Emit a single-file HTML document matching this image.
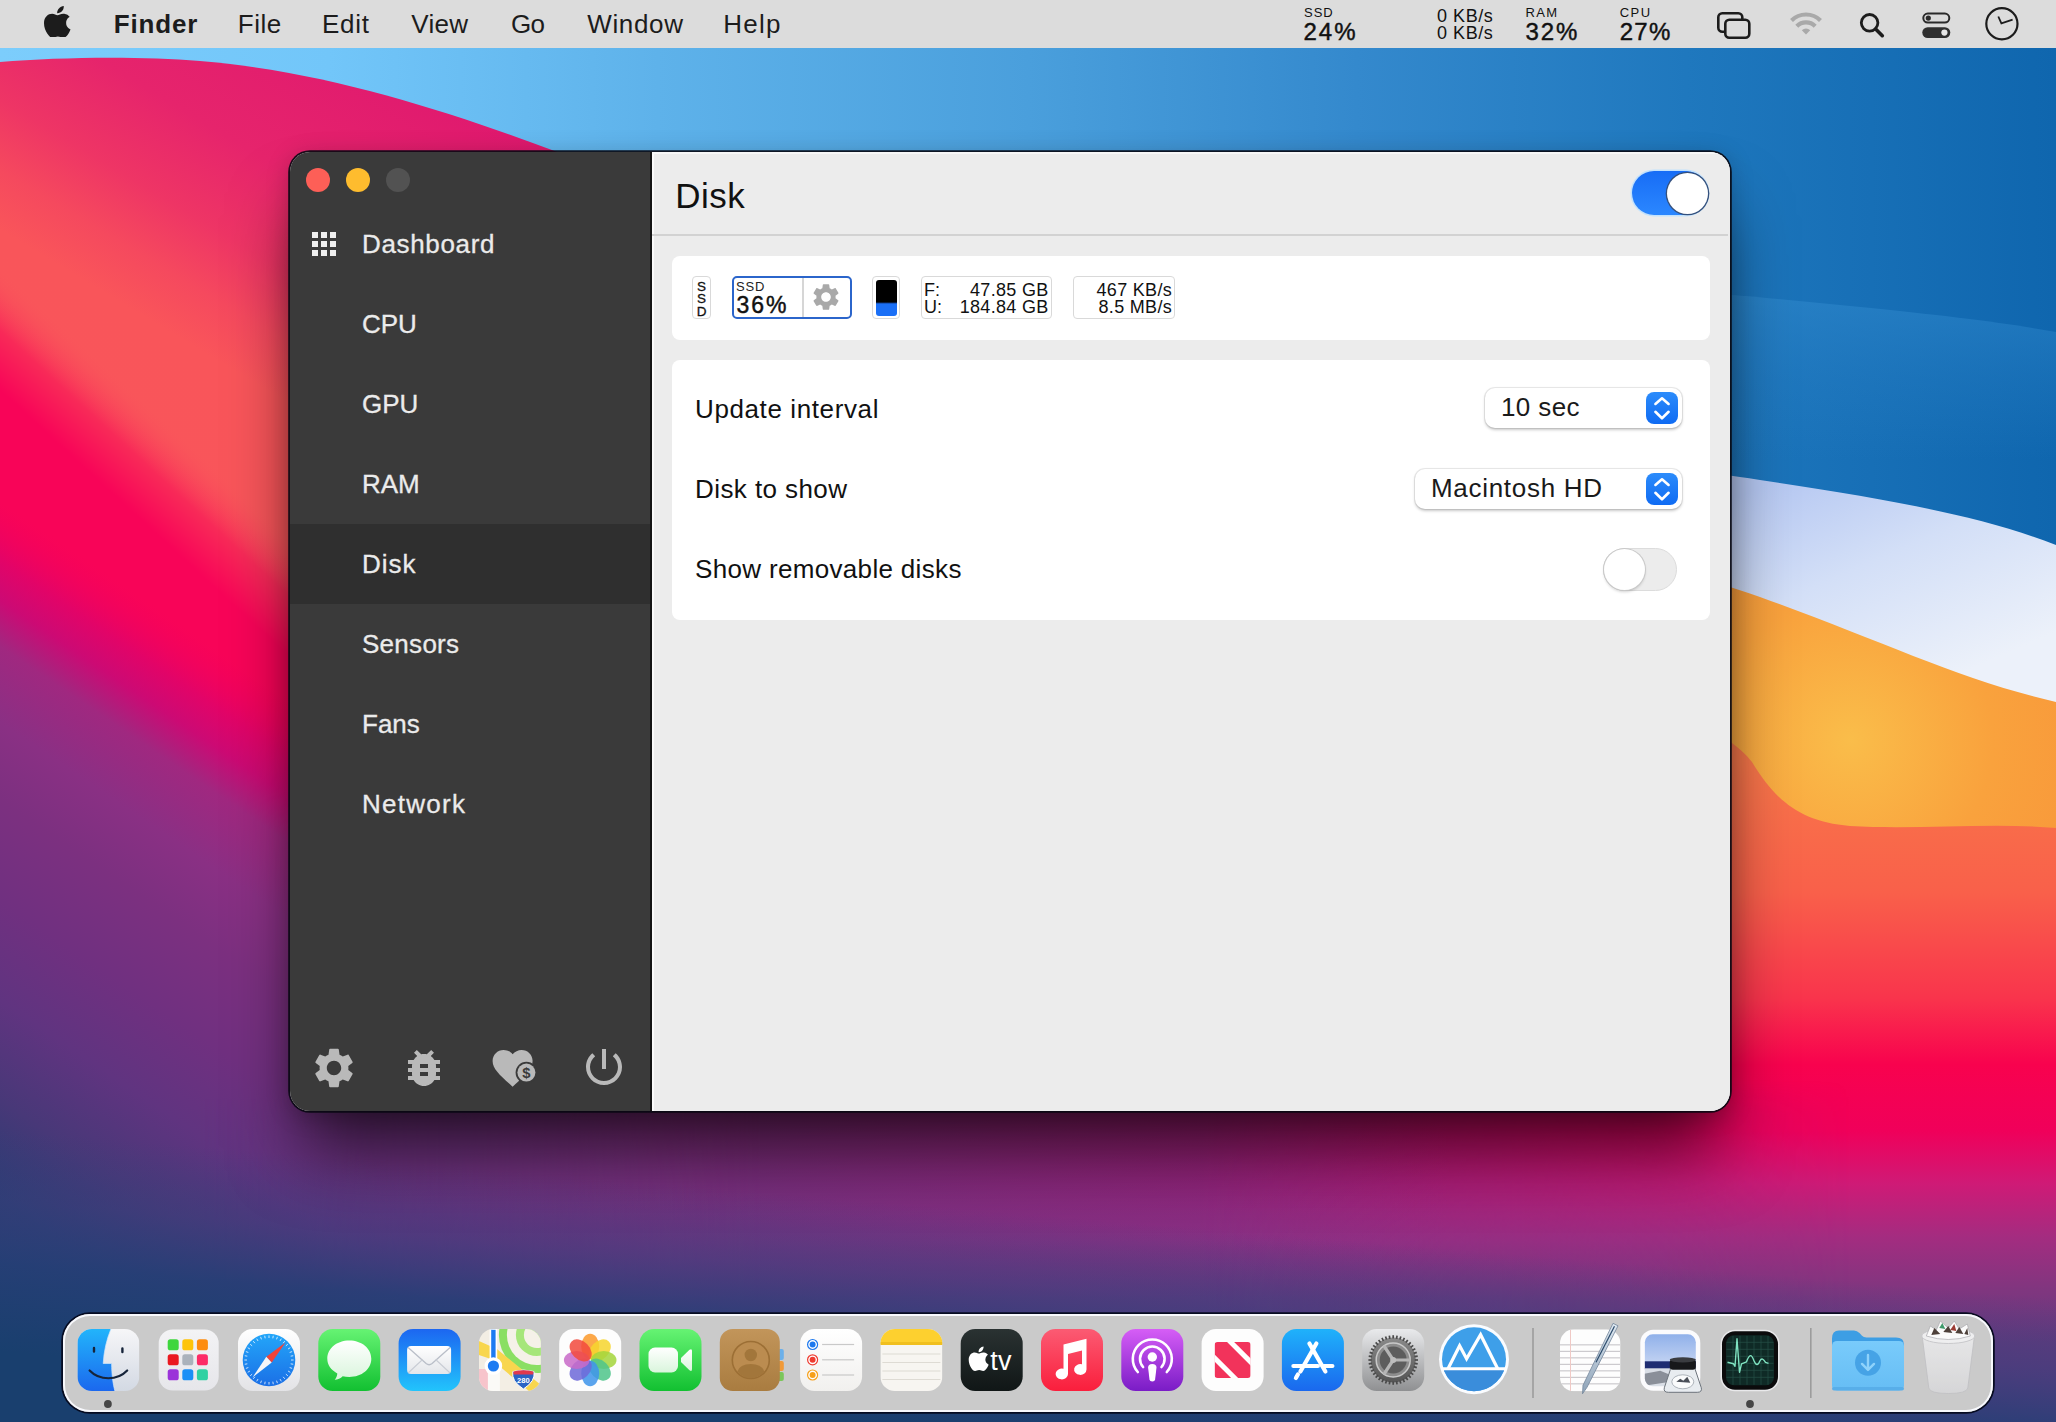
<!DOCTYPE html>
<html lang="en">
<head>
<meta charset="utf-8">
<title>Disk</title>
<style>
html,body{margin:0;padding:0}
body{width:2056px;height:1422px;overflow:hidden;position:relative;font-family:"Liberation Sans",sans-serif;background:#1a6fb6;color:#000}
.abs{position:absolute}
.val{-webkit-text-stroke:.45px currentColor}
#wall{position:absolute;left:0;top:0;width:2056px;height:1422px;display:block}
/* ---------- menubar ---------- */
#menubar{position:absolute;left:0;top:0;width:2056px;height:48px;background:#dcdcdc}
#menubar .mi{position:absolute;top:1px;height:48px;line-height:47px;font-size:26px;color:#1c1c1c;white-space:nowrap}
#menubar .st{position:absolute;white-space:nowrap;color:#111}
/* ---------- window ---------- */
#win{position:absolute;left:290px;top:152px;width:1440px;height:959px;border-radius:20px;background:#ececec;
 box-shadow:0 0 0 1.800px rgba(8,8,18,.9),0 50px 70px -12px rgba(0,0,0,.66),0 4px 24px rgba(0,0,0,.22);overflow:hidden}
#side{position:absolute;left:0;top:0;width:360px;height:959px;background:#3a3a3a}
#sep{position:absolute;left:360px;top:0;width:2px;height:959px;background:#141414}
#main{position:absolute;left:362px;top:0;width:1078px;height:959px;background:#ececec}
.nav{position:absolute;left:0;width:360px;height:80px;line-height:80px;font-size:26px;color:#ebebeb;white-space:nowrap}
.nav span{position:absolute;left:72px;top:0;-webkit-text-stroke:.3px #ebebeb}
.nav.sel{background:#2f2f2f}
.card{position:absolute;background:#fff;border-radius:8px}
.row{position:absolute;left:23px;font-size:26px;line-height:30px;color:#111;white-space:nowrap}
.wd{border:1px solid #d9d9d9;border-radius:4px;background:#fff;color:#111;white-space:nowrap}
.pop{border-radius:10px;background:#fff;box-shadow:0 0 0 1px rgba(0,0,0,.07),0 1.5px 3px rgba(0,0,0,.22)}
.pop span{position:absolute;top:-1.400px;line-height:40px;font-size:26px;color:#1a1a1a;white-space:nowrap}
.pop svg{position:absolute;right:4px;top:4px}
/* ---------- dock ---------- */
#dock{position:absolute;left:63px;top:1314px;width:1930px;height:98px;border-radius:27px;background:#cacaca;
 box-shadow:inset 0 0 0 2px #f7f8fc,0 0 0 1.800px rgba(4,8,28,.95)}
</style>
</head>
<body>
<svg id="wall" width="2056" height="1422" viewBox="0 0 2056 1422">
<defs>
 <linearGradient id="sky" gradientUnits="userSpaceOnUse" x1="0" y1="0" x2="2056" y2="0">
  <stop offset="0" stop-color="#7ccdfc"/><stop offset=".16" stop-color="#72c6f9"/><stop offset=".32" stop-color="#5eb2ea"/>
  <stop offset=".5" stop-color="#4a9fdc"/><stop offset=".66" stop-color="#3489cd"/><stop offset=".82" stop-color="#1f78be"/>
  <stop offset="1" stop-color="#0f66ae"/>
 </linearGradient>
 <linearGradient id="band" gradientUnits="userSpaceOnUse" x1="0" y1="295" x2="0" y2="460">
  <stop offset="0" stop-color="#2f88cc" stop-opacity=".6"/><stop offset=".5" stop-color="#2a82c8" stop-opacity=".3"/><stop offset="1" stop-color="#2a82c8" stop-opacity="0"/>
 </linearGradient>
 <linearGradient id="whiteB" gradientUnits="userSpaceOnUse" x1="1800" y1="470" x2="1900" y2="700">
  <stop offset="0" stop-color="#b6c8f2"/><stop offset=".45" stop-color="#d3dff7"/><stop offset="1" stop-color="#ecf1fa"/>
 </linearGradient>
 <radialGradient id="orangeB" gradientUnits="userSpaceOnUse" cx="1850" cy="740" r="260">
  <stop offset="0" stop-color="#fabd4a"/><stop offset=".55" stop-color="#f9a23d"/><stop offset="1" stop-color="#f8973a"/>
 </radialGradient>
 <linearGradient id="coralB" gradientUnits="userSpaceOnUse" x1="0" y1="760" x2="0" y2="1422">
  <stop offset="0" stop-color="#f8774a"/><stop offset=".2" stop-color="#f9604a"/><stop offset=".36" stop-color="#f9344c"/>
  <stop offset=".46" stop-color="#f8024e"/><stop offset=".56" stop-color="#f0005a"/><stop offset=".64" stop-color="#cf1a76"/>
  <stop offset=".72" stop-color="#a42c80"/><stop offset=".8" stop-color="#80367f"/><stop offset=".88" stop-color="#623a7e"/><stop offset="1" stop-color="#563a7e"/>
 </linearGradient>
 <linearGradient id="blobA" gradientUnits="userSpaceOnUse" x1="500" y1="0" x2="58.800" y2="735.300">
  <stop offset=".10" stop-color="#df186f"/><stop offset=".30" stop-color="#e6246c"/><stop offset=".40" stop-color="#ee3565"/>
  <stop offset=".47" stop-color="#f5495e"/><stop offset=".53" stop-color="#f9555a"/><stop offset="1" stop-color="#f9565a"/>
 </linearGradient>
 <linearGradient id="blobB1" gradientUnits="userSpaceOnUse" x1="0" y1="200" x2="-199.300" y2="416.600">
  <stop offset=".175" stop-color="#f9525b" stop-opacity="0"/><stop offset=".325" stop-color="#f82a58"/><stop offset=".475" stop-color="#f80458"/><stop offset="1" stop-color="#f80458"/>
 </linearGradient>
 <linearGradient id="blob" gradientUnits="userSpaceOnUse" x1="0" y1="450" x2="-441.700" y2="1099.600">
  <stop offset=".053" stop-color="#f4005c" stop-opacity="0"/><stop offset=".116" stop-color="#e20468"/><stop offset=".158" stop-color="#cc0a74"/>
  <stop offset=".207" stop-color="#a02880"/><stop offset=".287" stop-color="#8a3084"/><stop offset=".368" stop-color="#7c3080"/>
  <stop offset=".474" stop-color="#703080"/><stop offset=".579" stop-color="#603480"/><stop offset=".684" stop-color="#483878"/>
  <stop offset=".789" stop-color="#283c72"/><stop offset=".895" stop-color="#193b69"/><stop offset="1" stop-color="#143a65"/>
 </linearGradient>
 <linearGradient id="purp" gradientUnits="userSpaceOnUse" x1="0" y1="1080" x2="0" y2="1422">
  <stop offset="0" stop-color="#a8146a" stop-opacity="0"/><stop offset=".1" stop-color="#a8146a"/><stop offset=".3" stop-color="#98207a"/><stop offset=".47" stop-color="#8a3084"/>
  <stop offset=".64" stop-color="#5f3b80"/><stop offset="1" stop-color="#5a3a80"/>
 </linearGradient>
 <linearGradient id="indigoH" gradientUnits="userSpaceOnUse" x1="450" y1="0" x2="1450" y2="0">
  <stop offset="0" stop-color="#573a7e" stop-opacity=".8"/><stop offset=".5" stop-color="#6a3680" stop-opacity=".45"/><stop offset="1" stop-color="#803080" stop-opacity="0"/>
 </linearGradient>
 <linearGradient id="fadeR" gradientUnits="userSpaceOnUse" x1="1200" y1="0" x2="1850" y2="0">
  <stop offset="0" stop-color="#fff" stop-opacity="1"/><stop offset="1" stop-color="#fff" stop-opacity="0"/>
 </linearGradient>
 <mask id="mR" maskUnits="userSpaceOnUse" x="0" y="0" width="2056" height="1422"><rect x="0" y="0" width="2056" height="1422" fill="url(#fadeR)"/></mask>
 <linearGradient id="navy" gradientUnits="userSpaceOnUse" x1="0" y1="1130" x2="-18" y2="1350">
  <stop offset="0" stop-color="#3a3f7c" stop-opacity="0"/><stop offset=".32" stop-color="#3a3f7c" stop-opacity=".5"/>
  <stop offset=".6" stop-color="#263f76" stop-opacity=".9"/><stop offset="1" stop-color="#193f6e" stop-opacity="1"/>
 </linearGradient>
 <linearGradient id="fadeL" gradientUnits="userSpaceOnUse" x1="200" y1="0" x2="760" y2="0">
  <stop offset="0" stop-color="#fff" stop-opacity="1"/><stop offset="1" stop-color="#fff" stop-opacity="0"/>
 </linearGradient>
 <mask id="mL" maskUnits="userSpaceOnUse" x="0" y="0" width="2056" height="1422"><rect x="0" y="0" width="2056" height="1422" fill="url(#fadeL)"/></mask>
</defs>
<rect width="2056" height="1422" fill="url(#sky)"/>
<!-- right waves -->
<path d="M1500,282 C1650,286 1750,296 1850,306 C1950,316 2000,322 2056,332 L2056,480 L1500,480 Z" fill="url(#band)"/>
<path d="M1500,455 C1620,462 1700,470 1760,480 C1880,498 1980,515 2056,545 L2056,1422 L1500,1422 Z" fill="url(#whiteB)"/>
<path d="M1500,530 C1600,550 1700,575 1760,597 C1880,640 1960,680 2056,702 L2056,1422 L1500,1422 Z" fill="url(#orangeB)"/>
<path d="M200,640 L1500,640 C1640,690 1730,730 1752,762 C1775,800 1800,822 1850,826 C1920,830 1990,822 2056,828 L2056,1422 L200,1422 Z" fill="url(#coralB)"/>
<rect x="200" y="1080" width="1856" height="342" fill="url(#purp)" mask="url(#mR)"/>
<rect x="200" y="1090" width="1300" height="332" fill="url(#indigoH)"/>
<!-- left blob -->
<path d="M0,62 C60,57 140,56 200,61 C330,72 450,112 560,153 C760,230 900,420 900,700 L900,1100 L0,1100 Z" fill="url(#blobA)"/>
<path d="M0,62 C60,57 140,56 200,61 C330,72 450,112 560,153 C760,230 900,420 900,700 L900,1100 L0,1100 Z" fill="url(#blobB1)"/>
<path d="M0,62 C60,57 140,56 200,61 C330,72 450,112 560,153 C760,230 900,420 900,700 L900,1100 L0,1100 Z" fill="url(#blob)"/>
<rect x="0" y="1099" width="800" height="323" fill="url(#blob)" mask="url(#mL)"/>
<rect x="0" y="1100" width="2056" height="322" fill="url(#navy)"/>
</svg>
<div id="menubar">
 <svg class="abs" style="left:44px;top:5.500px" width="26.500" height="31.800" viewBox="0 0 814 1000" preserveAspectRatio="none"><path fill="#1c1c1c" d="M788.1 340.9c-5.8 4.5-108.2 62.2-108.2 190.5 0 148.4 130.3 200.9 134.2 202.2-.6 3.2-20.700 73.900-68.700 143.900-42.800 61.600-87.500 123.100-155.500 123.100s-85.500-39.500-164-39.500c-76.500 0-103.700 40.800-165.900 40.800s-105.600-57-155.500-127C46.700 790.700 0 663 0 541.800c0-194.400 126.400-297.500 250.800-297.500 66.100 0 121.200 43.400 162.700 43.400 39.500 0 101.100-46 176.300-46 28.500 0 130.900 2.600 198.300 99.200zm-234-181.500c31.100-36.900 53.100-88.100 53.100-139.300 0-7.100-.6-14.300-1.900-20.100-50.600 1.900-110.800 33.700-147.100 75.800-28.500 32.400-55.100 83.600-55.100 135.500 0 7.800 1.300 15.600 1.900 18.100 3.200.6 8.400 1.300 13.600 1.300 45.400 0 102.500-30.400 135.500-71.300z"/></svg>
 <div class="mi" style="left:113.700px;font-weight:bold;letter-spacing:.86px">Finder</div>
 <div class="mi" style="left:237.800px;letter-spacing:.5px">File</div>
 <div class="mi" style="left:321.900px;letter-spacing:.77px">Edit</div>
 <div class="mi" style="left:411.300px;letter-spacing:.27px">View</div>
 <div class="mi" style="left:510.900px;letter-spacing:-.5px">Go</div>
 <div class="mi" style="left:587.200px;letter-spacing:.66px">Window</div>
 <div class="mi" style="left:723.300px;letter-spacing:1.2px">Help</div>
 <!-- status items -->
 <div class="st" style="left:1304px;top:6px;font-size:13px;line-height:14px;letter-spacing:1px">SSD</div>
 <div class="st val" style="left:1303.500px;top:18.500px;font-size:24px;line-height:26px;letter-spacing:2px">24%</div>
 <div class="st" style="left:1437px;top:6.500px;font-size:18px;line-height:18px;text-align:right;width:56px;letter-spacing:.55px">0 KB/s</div>
 <div class="st" style="left:1437px;top:24.300px;font-size:18px;line-height:18px;text-align:right;width:56px;letter-spacing:.55px">0 KB/s</div>
 <div class="st" style="left:1525.600px;top:6px;font-size:13px;line-height:14px;letter-spacing:1.3px">RAM</div>
 <div class="st val" style="left:1525.600px;top:18.500px;font-size:24px;line-height:26px;letter-spacing:1.800px">32%</div>
 <div class="st" style="left:1619.800px;top:6px;font-size:13px;line-height:14px;letter-spacing:1.4px">CPU</div>
 <div class="st val" style="left:1619.800px;top:18.500px;font-size:24px;line-height:26px;letter-spacing:1.200px">27%</div>
 <svg class="abs" style="left:1710px;top:0" width="346" height="48" viewBox="1710 0 346 48" fill="none">
  <!-- screen mirroring -->
  <rect x="1718.3" y="13.3" width="24" height="18.5" rx="4" stroke="#1c1c1c" stroke-width="2.6"/>
  <rect x="1725.3" y="19.8" width="24" height="18" rx="4" fill="#dcdcdc" stroke="#1c1c1c" stroke-width="2.6"/>
  <!-- wifi (dim) -->
  <g stroke="#a9a9a9" stroke-width="4.2" stroke-linecap="butt">
   <path d="M1791.5,20.5 A20.5,20.5 0 0 1 1820.500,20.500"/>
   <path d="M1796.800,26.200 A13,13 0 0 1 1815.200,26.200"/>
  </g>
  <path d="M1801.8,30.200 A6,6 0 0 1 1810.200,30.200 L1806,34.600 Z" fill="#a9a9a9"/>
  <!-- search -->
  <circle cx="1869.600" cy="22.8" r="8.300" stroke="#1c1c1c" stroke-width="2.800"/>
  <path d="M1875.600,29 L1882.300,35.700" stroke="#1c1c1c" stroke-width="3.600" stroke-linecap="round"/>
  <!-- control center -->
  <rect x="1923.300" y="13.600" width="26" height="9" rx="4.500" stroke="#2a2a2a" stroke-width="2"/>
  <circle cx="1928.300" cy="18.100" r="2.600" fill="#2a2a2a"/>
  <rect x="1922.300" y="27.200" width="28" height="10.800" rx="5.400" fill="#2f2f2f"/>
  <circle cx="1944.400" cy="32.600" r="3.100" fill="#e6e6e6"/>
  <!-- clock -->
  <circle cx="2001.900" cy="23.700" r="15.600" stroke="#1c1c1c" stroke-width="2.200"/>
  <path d="M1998.300,16.500 L2001.400,23.300 L2012.600,19.600" stroke="#1c1c1c" stroke-width="1.800" stroke-linejoin="miter"/>
 </svg>
</div>
<div id="win">
 <div id="side">
  <div class="abs" style="left:16px;top:16px;width:24px;height:24px;border-radius:50%;background:#fd5f57"></div>
  <div class="abs" style="left:56px;top:16px;width:24px;height:24px;border-radius:50%;background:#febc2e"></div>
  <div class="abs" style="left:96px;top:16px;width:24px;height:24px;border-radius:50%;background:#525252"></div>
  <div class="nav" style="top:52px">
   <svg class="abs" style="left:22px;top:28px" width="24" height="24" viewBox="0 0 24 24" fill="#efefef"><rect x="0" y="0" width="6" height="6"/><rect x="9" y="0" width="6" height="6"/><rect x="18" y="0" width="6" height="6"/><rect x="0" y="9" width="6" height="6"/><rect x="9" y="9" width="6" height="6"/><rect x="18" y="9" width="6" height="6"/><rect x="0" y="18" width="6" height="6"/><rect x="9" y="18" width="6" height="6"/><rect x="18" y="18" width="6" height="6"/></svg>
   <span style="letter-spacing:.66px">Dashboard</span></div>
  <div class="nav" style="top:132px"><span>CPU</span></div>
  <div class="nav" style="top:212px"><span>GPU</span></div>
  <div class="nav" style="top:292px"><span>RAM</span></div>
  <div class="nav sel" style="top:372px"><span style="letter-spacing:1px">Disk</span></div>
  <div class="nav" style="top:452px"><span style="letter-spacing:.28px">Sensors</span></div>
  <div class="nav" style="top:532px"><span>Fans</span></div>
  <div class="nav" style="top:612px"><span style="letter-spacing:1.27px">Network</span></div>
  <!-- bottom icons (48px material) -->
  <svg class="abs" style="left:20px;top:892px" width="48" height="48" viewBox="0 0 24 24" fill="#b9b9b9"><path d="M19.140,12.940c0.040-0.300,0.060-0.610,0.060-0.940c0-0.320-0.020-0.640-0.070-0.940l2.030-1.580c0.180-0.140,0.230-0.410,0.120-0.610 l-1.920-3.320c-0.120-0.220-0.370-0.290-0.590-0.220l-2.390,0.960c-0.500-0.380-1.030-0.700-1.620-0.940L14.400,2.810c-0.040-0.240-0.240-0.410-0.480-0.410 h-3.840c-0.240,0-0.430,0.170-0.470,0.410L9.250,5.350C8.660,5.590,8.120,5.920,7.630,6.290L5.240,5.330c-0.220-0.080-0.470,0-0.590,0.220L2.740,8.870 C2.620,9.080,2.660,9.340,2.860,9.480l2.030,1.580C4.840,11.360,4.800,11.690,4.800,12s0.020,0.640,0.070,0.940l-2.030,1.580 c-0.180,0.140-0.230,0.410-0.120,0.610l1.920,3.320c0.120,0.220,0.370,0.290,0.590,0.220l2.390-0.960c0.500,0.380,1.030,0.700,1.620,0.940l0.360,2.540 c0.050,0.240,0.240,0.410,0.480,0.410h3.840c0.240,0,0.440-0.170,0.470-0.410l0.360-2.540c0.590-0.240,1.130-0.560,1.620-0.940l2.390,0.960 c0.220,0.080,0.470,0,0.590-0.220l1.920-3.320c0.120-0.220,0.070-0.470-0.120-0.610L19.140,12.940z M12,15.600c-1.980,0-3.600-1.620-3.600-3.600 s1.620-3.600,3.600-3.600s3.600,1.620,3.600,3.600S13.980,15.600,12,15.600z"/></svg>
  <svg class="abs" style="left:110px;top:892px" width="48" height="48" viewBox="0 0 24 24" fill="#b9b9b9"><path d="M20 8h-2.810c-.45-.78-1.070-1.450-1.820-1.960L17 4.410 15.590 3l-2.170 2.170C12.960 5.060 12.490 5 12 5c-.49 0-.96.06-1.410.17L8.410 3 7 4.410l1.620 1.630C7.880 6.550 7.260 7.220 6.810 8H4v2h2.090c-.05.33-.09.66-.09 1v1H4v2h2v1c0 .34.04.67.09 1H4v2h2.810c1.040 1.790 2.970 3 5.190 3s4.150-1.210 5.190-3H20v-2h-2.090c.05-.33.09-.66.09-1v-1h2v-2h-2v-1c0-.34-.04-.67-.09-1H20V8zm-6 8h-4v-2h4v2zm0-4h-4v-2h4v2z"/></svg>
  <svg class="abs" style="left:200px;top:892px" width="48" height="48" viewBox="0 0 24 24"><path fill="#b9b9b9" d="M11.300 21.350l-1.450-1.320C4.700 15.360 1.300 12.280 1.300 8.500 1.300 5.420 3.720 3 6.800 3c1.740 0 3.410.81 4.500 2.090C12.390 3.810 14.060 3 15.800 3 18.880 3 21.300 5.420 21.300 8.500c0 3.780-3.400 6.860-8.550 11.540L11.300 21.350z"/><circle cx="18.200" cy="14.300" r="5.400" fill="#3a3a3a"/><circle cx="18.200" cy="14.300" r="4.500" fill="#b9b9b9"/><text x="18.200" y="17" font-family="Liberation Sans, sans-serif" font-size="7.400" font-weight="bold" text-anchor="middle" fill="#3a3a3a">$</text></svg>
  <svg class="abs" style="left:290px;top:891px" width="48" height="48" viewBox="0 0 24 24" fill="#b9b9b9"><path d="M13 3h-2v10h2V3zm4.830 2.170l-1.420 1.420C17.990 7.860 19 9.810 19 12c0 3.870-3.130 7-7 7s-7-3.130-7-7c0-2.190 1.010-4.140 2.580-5.420L6.170 5.170C4.230 6.820 3 9.260 3 12c0 4.970 4.030 9 9 9s9-4.030 9-9c0-2.740-1.230-5.180-3.170-6.830z"/></svg>
 </div>
 <div id="sep"></div>
 <div id="main">
  <div class="abs" style="left:0;top:0;width:2px;height:959px;background:#fafafa"></div><div class="abs" style="left:0;top:0;width:1078px;height:1.500px;background:#f7f7f7"></div>
  <div class="abs" style="left:23.300px;top:22px;font-size:35px;line-height:44px;color:#111;letter-spacing:.45px">Disk</div>
  <!-- toggle on -->
  <div class="abs" style="left:980px;top:19px;width:76px;height:44px;border-radius:22px;background:linear-gradient(#176df6,#2b87ff);box-shadow:0 0 0 1.500px rgba(190,225,255,.9)">
   <div class="abs" style="left:35px;top:1.500px;width:41px;height:41px;border-radius:50%;background:#fff;box-shadow:0 0 0 1.300px #34507c"></div></div>
  <div class="abs" style="left:0;top:82px;width:1076px;height:2px;background:#d2d2d2"></div>
  <!-- card 1 -->
  <div class="card" style="left:20px;top:104px;width:1038px;height:84px">
   <div class="abs wd" style="left:20px;top:20px;width:17px;height:41px"><div class="abs" style="left:0;top:3.500px;width:17px;text-align:center;font-size:13.500px;line-height:12.500px;-webkit-text-stroke:.3px #111">S<br>S<br>D</div></div>
   <div class="abs" style="left:60px;top:20px;width:116px;height:39px;border:2px solid #2b65cb;border-radius:5px;background:#fff">
    <div class="abs" style="left:2px;top:1.500px;font-size:13px;line-height:14px;color:#222;letter-spacing:.8px">SSD</div>
    <div class="abs val" style="left:2.500px;top:13.500px;font-size:23px;line-height:26px;color:#111;letter-spacing:2px">36%</div>
    <div class="abs" style="left:68px;top:0;width:1.500px;height:39px;background:#d6d6d6"></div>
    <svg class="abs" style="left:76px;top:3px" width="32" height="32" viewBox="0 0 24 24" fill="#a9a9a9"><path d="M19.140,12.940c0.040-0.300,0.060-0.610,0.060-0.940c0-0.320-0.020-0.640-0.070-0.940l2.030-1.580c0.180-0.140,0.230-0.410,0.120-0.610 l-1.920-3.320c-0.120-0.220-0.370-0.290-0.590-0.220l-2.390,0.960c-0.500-0.380-1.030-0.700-1.620-0.940L14.400,2.810c-0.040-0.240-0.240-0.410-0.480-0.410 h-3.840c-0.240,0-0.430,0.170-0.470,0.410L9.250,5.350C8.660,5.590,8.120,5.920,7.630,6.290L5.240,5.330c-0.220-0.080-0.470,0-0.590,0.220L2.740,8.870 C2.620,9.080,2.660,9.340,2.860,9.480l2.030,1.580C4.840,11.360,4.800,11.690,4.800,12s0.020,0.640,0.070,0.940l-2.030,1.580 c-0.180,0.140-0.230,0.410-0.120,0.610l1.920,3.320c0.120,0.220,0.370,0.290,0.590,0.220l2.390-0.960c0.500,0.380,1.030,0.700,1.620,0.940l0.360,2.540 c0.050,0.240,0.240,0.410,0.480,0.410h3.840c0.240,0,0.440-0.170,0.470-0.410l0.360-2.540c0.590-0.240,1.130-0.560,1.620-0.940l2.390,0.960 c0.220,0.080,0.470,0,0.590-0.220l1.920-3.320c0.120-0.220,0.070-0.470-0.120-0.610L19.140,12.940z M12,15.600c-1.980,0-3.600-1.620-3.600-3.600 s1.620-3.600,3.600-3.600s3.600,1.620,3.600,3.600S13.980,15.600,12,15.600z"/></svg>
   </div>
   <div class="abs wd" style="left:200px;top:20px;width:26px;height:41px"><div class="abs" style="left:3px;top:3px;width:21px;height:36px;border-radius:3px;background:linear-gradient(#000 0,#000 60%,#0a2a66 64%,#1a6ff6 66%,#1a6ff6 100%)"></div></div>
   <div class="abs wd" style="left:249px;top:20px;width:129px;height:41px;font-size:18px;line-height:17px">
    <div class="abs" style="left:2px;top:4.500px">F:</div><div class="abs" style="right:2.500px;top:4.500px;letter-spacing:.3px">47.85 GB</div>
    <div class="abs" style="left:2px;top:21.800px">U:</div><div class="abs" style="right:2.500px;top:21.800px;letter-spacing:.3px">184.84 GB</div></div>
   <div class="abs wd" style="left:401px;top:20px;width:100px;height:41px;font-size:18px;line-height:17px">
    <div class="abs" style="right:2px;top:4.500px;letter-spacing:.3px">467 KB/s</div><div class="abs" style="right:2px;top:21.800px;letter-spacing:.3px">8.5 MB/s</div></div>
  </div>
  <!-- card 2 -->
  <div class="card" style="left:20px;top:208px;width:1038px;height:260px">
   <div class="row" style="top:33.600px;letter-spacing:.61px">Update interval</div>
   <div class="row" style="top:113.600px;letter-spacing:.42px">Disk to show</div>
   <div class="row" style="top:193.800px;letter-spacing:.33px">Show removable disks</div>
   <div class="abs pop" style="left:813px;top:28px;width:197px;height:40px"><span style="left:16px;letter-spacing:.4px">10 sec</span><svg width="32" height="32" viewBox="0 0 32 32"><defs><linearGradient id="stp" x1="0" y1="0" x2="0" y2="1"><stop offset="0" stop-color="#2c8cfb"/><stop offset="1" stop-color="#0f6bf3"/></linearGradient></defs><rect width="32" height="32" rx="8" fill="url(#stp)"/><path d="M9.400,11.900 L16,6.300 L22.600,11.900 M9.400,19.800 L16,26.300 L22.600,19.800" fill="none" stroke="#fff" stroke-width="2.600" stroke-linecap="round" stroke-linejoin="round"/></svg></div>
   <div class="abs pop" style="left:743px;top:109px;width:267px;height:40px"><span style="left:16px;letter-spacing:.7px">Macintosh HD</span><svg width="32" height="32" viewBox="0 0 32 32"><rect width="32" height="32" rx="8" fill="url(#stp)"/><path d="M9.400,11.900 L16,6.300 L22.600,11.900 M9.400,19.800 L16,26.300 L22.600,19.800" fill="none" stroke="#fff" stroke-width="2.600" stroke-linecap="round" stroke-linejoin="round"/></svg></div>
   <div class="abs" style="left:931px;top:188px;width:72px;height:41px;border-radius:22px;background:#ececec;border:1px solid #dcdcdc">
    <div class="abs" style="left:0;top:0;width:41px;height:41px;border-radius:50%;background:#fff;box-shadow:0 0 0 1px #c9c9c9,0 2px 3px rgba(0,0,0,.18)"></div></div>
  </div>
 </div>
</div>
<div id="dock"></div>
<!--DOCKSVG--><svg class="abs" style="left:0;top:1300px" width="2056" height="122" viewBox="0 1300 2056 122">
<defs><clipPath id="sq"><rect width="62" height="62" rx="14.500"/></clipPath><linearGradient id="fB" x1="0" y1="0" x2="0" y2="1"><stop offset="0" stop-color="#22b4fb"/><stop offset="1" stop-color="#1b68ee"/></linearGradient><linearGradient id="fW" x1="0" y1="0" x2="0" y2="1"><stop offset="0" stop-color="#f6f6f8"/><stop offset="1" stop-color="#d3d9e3"/></linearGradient><linearGradient id="lp" x1="0" y1="0" x2="0" y2="1"><stop offset="0" stop-color="#f3f3f5"/><stop offset="1" stop-color="#e6e6ea"/></linearGradient><linearGradient id="sfBg" x1="0" y1="0" x2="0" y2="1"><stop offset="0" stop-color="#ffffff"/><stop offset="1" stop-color="#e3e3e6"/></linearGradient><linearGradient id="sfC" x1="0" y1="0" x2="0" y2="1"><stop offset="0" stop-color="#23a6f9"/><stop offset="1" stop-color="#1b6fe6"/></linearGradient><linearGradient id="msg" x1="0" y1="0" x2="0" y2="1"><stop offset="0" stop-color="#66f373"/><stop offset="1" stop-color="#12c031"/></linearGradient><linearGradient id="msgB" x1="0" y1="0" x2="0" y2="1"><stop offset="0" stop-color="#ffffff"/><stop offset="1" stop-color="#d9f5dc"/></linearGradient><linearGradient id="mail" x1="0" y1="0" x2="0" y2="1"><stop offset="0" stop-color="#1c66f1"/><stop offset="1" stop-color="#22c4fc"/></linearGradient><linearGradient id="mailE" x1="0" y1="0" x2="0" y2="1"><stop offset="0" stop-color="#ffffff"/><stop offset="1" stop-color="#e4e6ea"/></linearGradient><linearGradient id="ct" x1="0" y1="0" x2="0" y2="1"><stop offset="0" stop-color="#c2955a"/><stop offset="1" stop-color="#a97c40"/></linearGradient><linearGradient id="rm" x1="0" y1="0" x2="0" y2="1"><stop offset="0" stop-color="#ffffff"/><stop offset="1" stop-color="#f1f0ee"/></linearGradient><linearGradient id="tv" x1="0" y1="0" x2="0" y2="1"><stop offset="0" stop-color="#2a3232"/><stop offset="1" stop-color="#101616"/></linearGradient><linearGradient id="mu" x1="0" y1="0" x2="0" y2="1"><stop offset="0" stop-color="#fb5b73"/><stop offset="1" stop-color="#fa1e3c"/></linearGradient><linearGradient id="pd" x1="0" y1="0" x2="0" y2="1"><stop offset="0" stop-color="#d65ef6"/><stop offset="1" stop-color="#7a1cc6"/></linearGradient><linearGradient id="as" x1="0" y1="0" x2="0" y2="1"><stop offset="0" stop-color="#1fb2fb"/><stop offset="1" stop-color="#1a68ee"/></linearGradient><linearGradient id="sp" x1="0" y1="0" x2="0" y2="1"><stop offset="0" stop-color="#e9eaec"/><stop offset="1" stop-color="#8f9092"/></linearGradient><linearGradient id="spG" x1="0" y1="0" x2="0" y2="1"><stop offset="0" stop-color="#8a8a8a"/><stop offset="1" stop-color="#555555"/></linearGradient><linearGradient id="pen" x1="0" y1="0" x2="0" y2="1"><stop offset="0" stop-color="#dfe9f2"/><stop offset="1" stop-color="#8ea3b8"/></linearGradient><linearGradient id="pvS" x1="0" y1="0" x2="0" y2="1"><stop offset="0" stop-color="#8fb0ea"/><stop offset="1" stop-color="#c3d3f2"/></linearGradient><linearGradient id="fd" x1="0" y1="0" x2="0" y2="1"><stop offset="0" stop-color="#79cbfb"/><stop offset="1" stop-color="#66bdf4"/></linearGradient><linearGradient id="tr" x1="0" y1="0" x2="0" y2="1"><stop offset="0" stop-color="#eeeeef"/><stop offset="1" stop-color="#d9d9db"/></linearGradient></defs>
<g transform="translate(77.4,1329)"><g clip-path="url(#sq)"><rect width="62" height="62" fill="url(#fW)"/>
<path d="M0,0 H33.500 C29,11 26.500,22 25.800,34.500 H34.200 C34.300,45 35.500,55 37.500,62 H0 Z" fill="url(#fB)"/>
<path d="M33.500,0 C29,11 26.500,22 25.800,34.500 H34.200 C34.300,45 35.500,55 37.500,62" fill="none" stroke="#cfe6fa" stroke-width="1" opacity=".7"/>
<path d="M16.600,19 V22.600 M45,19.500 V23.100" stroke="#16243a" stroke-width="2.400" stroke-linecap="round"/>
<path d="M12.200,41.500 C22,51.800 40,51.800 49.800,41.500" fill="none" stroke="#16243a" stroke-width="2.200" stroke-linecap="round"/></g></g>
<g transform="translate(157.7,1329)"><rect width="60" height="61" x="1" y=".5" rx="14" fill="url(#lp)"/><rect x="10" y="10.3" width="11" height="11" rx="2.600" fill="#3ed63e"/><rect x="24.6" y="10.3" width="11" height="11" rx="2.600" fill="#fec40a"/><rect x="39.2" y="10.3" width="11" height="11" rx="2.600" fill="#fd8c10"/><rect x="10" y="25.3" width="11" height="11" rx="2.600" fill="#ea1820"/><rect x="24.6" y="25.3" width="11" height="11" rx="2.600" fill="#aab2bb"/><rect x="39.2" y="25.3" width="11" height="11" rx="2.600" fill="#fd2b66"/><rect x="10" y="40.3" width="11" height="11" rx="2.600" fill="#9b33d9"/><rect x="24.6" y="40.3" width="11" height="11" rx="2.600" fill="#1a8ff6"/><rect x="39.2" y="40.3" width="11" height="11" rx="2.600" fill="#2fd1a2"/></g>
<g transform="translate(238.0,1329)"><rect width="62" height="62" rx="14.500" fill="url(#sfBg)"/><circle cx="31" cy="31" r="26.300" fill="url(#sfC)"/>
<g stroke="#fff" stroke-width=".9" opacity=".85"><line x1="53.00" y1="31.00" x2="55.60" y2="31.00"/><line x1="52.67" y1="34.82" x2="55.23" y2="35.27"/><line x1="51.67" y1="38.52" x2="54.12" y2="39.41"/><line x1="50.05" y1="42.00" x2="52.30" y2="43.30"/><line x1="47.85" y1="45.14" x2="49.84" y2="46.81"/><line x1="45.14" y1="47.85" x2="46.81" y2="49.84"/><line x1="42.00" y1="50.05" x2="43.30" y2="52.30"/><line x1="38.52" y1="51.67" x2="39.41" y2="54.12"/><line x1="34.82" y1="52.67" x2="35.27" y2="55.23"/><line x1="31.00" y1="53.00" x2="31.00" y2="55.60"/><line x1="27.18" y1="52.67" x2="26.73" y2="55.23"/><line x1="23.48" y1="51.67" x2="22.59" y2="54.12"/><line x1="20.00" y1="50.05" x2="18.70" y2="52.30"/><line x1="16.86" y1="47.85" x2="15.19" y2="49.84"/><line x1="14.15" y1="45.14" x2="12.16" y2="46.81"/><line x1="11.95" y1="42.00" x2="9.70" y2="43.30"/><line x1="10.33" y1="38.52" x2="7.88" y2="39.41"/><line x1="9.33" y1="34.82" x2="6.77" y2="35.27"/><line x1="9.00" y1="31.00" x2="6.40" y2="31.00"/><line x1="9.33" y1="27.18" x2="6.77" y2="26.73"/><line x1="10.33" y1="23.48" x2="7.88" y2="22.59"/><line x1="11.95" y1="20.00" x2="9.70" y2="18.70"/><line x1="14.15" y1="16.86" x2="12.16" y2="15.19"/><line x1="16.86" y1="14.15" x2="15.19" y2="12.16"/><line x1="20.00" y1="11.95" x2="18.70" y2="9.70"/><line x1="23.48" y1="10.33" x2="22.59" y2="7.88"/><line x1="27.18" y1="9.33" x2="26.73" y2="6.77"/><line x1="31.00" y1="9.00" x2="31.00" y2="6.40"/><line x1="34.82" y1="9.33" x2="35.27" y2="6.77"/><line x1="38.52" y1="10.33" x2="39.41" y2="7.88"/><line x1="42.00" y1="11.95" x2="43.30" y2="9.70"/><line x1="45.14" y1="14.15" x2="46.81" y2="12.16"/><line x1="47.85" y1="16.86" x2="49.84" y2="15.19"/><line x1="50.05" y1="20.00" x2="52.30" y2="18.70"/><line x1="51.67" y1="23.48" x2="54.12" y2="22.59"/><line x1="52.67" y1="27.18" x2="55.23" y2="26.73"/></g>
<path d="M47.500,13.500 L28.300,27.800 L33.700,33.600 Z" fill="#f0443a"/><path d="M14.500,48.500 L28.300,27.800 L33.700,33.600 Z" fill="#f4f6f8"/></g>
<g transform="translate(318.3,1329)"><rect width="62" height="62" rx="14.500" fill="url(#msg)"/>
<path d="M31,11.500 C43.500,11.500 53,19.500 53,29.800 C53,40 43.500,48 31,48 C28.700,48 26.500,47.700 24.400,47.200 C22.300,49.300 19.500,50.600 16.300,50.800 C18,49 18.900,46.800 19,44.500 C12.800,41.200 9,35.900 9,29.800 C9,19.500 18.500,11.500 31,11.500 Z" fill="url(#msgB)"/></g>
<g transform="translate(398.6,1329)"><rect width="62" height="62" rx="14.500" fill="url(#mail)"/>
<rect x="8.500" y="17" width="44" height="28" rx="4" fill="url(#mailE)"/>
<path d="M9.500,18.500 L27.500,34.500 Q30.500,37 33.500,34.500 L51.500,18.500" fill="none" stroke="#b9bec8" stroke-width="1.300"/>
<path d="M9.500,44 L24,30.500 M51.500,44 L37,30.500" fill="none" stroke="#c9cdd5" stroke-width="1.100"/></g>
<g transform="translate(478.9,1329)"><g clip-path="url(#sq)"><rect width="62" height="62" fill="#f3eee4"/>
<circle cx="58" cy="6" r="38" fill="#8adf63"/><circle cx="58" cy="6" r="30" fill="#f5f1e8"/><circle cx="58" cy="6" r="21" fill="#a6e67a"/><circle cx="58" cy="6" r="13" fill="#f5f1e8"/>
<path d="M0,12 L18,20 L62,56 L62,62 L50,62 L12,30 L0,26 Z" fill="#f8d64e"/>
<path d="M0,40 H10 V62 H0 Z" fill="#f7c4cb"/><rect x="9" y="38" width="12" height="24" fill="#fbfaf7"/>
<rect x="11.500" y="0" width="6" height="30" fill="#1d7bf2" stroke="#fff" stroke-width="1.600"/>
<circle cx="14.500" cy="37" r="8.800" fill="#fff"/><circle cx="14.500" cy="37" r="5.600" fill="#1d7bf2"/>
<path d="M34,42.500 Q44.500,39.500 55,42.500 Q57,52 44.500,60 Q32,52 34,42.500 Z" fill="#2b63c4" stroke="#fff" stroke-width="1"/>
<path d="M34.500,42.600 Q44.500,39.800 54.500,42.600 L54.300,45.500 H34.700 Z" fill="#e2384d"/></g>
<text x="44.500" y="54.300" font-family="Liberation Sans, sans-serif" font-weight="bold" font-size="7.600" text-anchor="middle" fill="#fff">280</text></g>
<g transform="translate(559.2,1329)"><rect width="62" height="62" rx="14.500" fill="#fdfdfd"/><ellipse cx="31" cy="17.500" rx="9" ry="12.800" fill="#fb9a2c" opacity=".86" transform="rotate(0 31 31)"/><ellipse cx="31" cy="17.500" rx="9" ry="12.800" fill="#f6d52e" opacity=".86" transform="rotate(45 31 31)"/><ellipse cx="31" cy="17.500" rx="9" ry="12.800" fill="#a4d53c" opacity=".86" transform="rotate(90 31 31)"/><ellipse cx="31" cy="17.500" rx="9" ry="12.800" fill="#4fc58a" opacity=".86" transform="rotate(135 31 31)"/><ellipse cx="31" cy="17.500" rx="9" ry="12.800" fill="#3f95ea" opacity=".86" transform="rotate(180 31 31)"/><ellipse cx="31" cy="17.500" rx="9" ry="12.800" fill="#6f6ad8" opacity=".86" transform="rotate(225 31 31)"/><ellipse cx="31" cy="17.500" rx="9" ry="12.800" fill="#c86ac8" opacity=".86" transform="rotate(270 31 31)"/><ellipse cx="31" cy="17.500" rx="9" ry="12.800" fill="#f24a3e" opacity=".86" transform="rotate(315 31 31)"/></g>
<g transform="translate(639.5,1329)"><rect width="62" height="62" rx="14.500" fill="url(#msg)"/>
<rect x="9" y="18.500" width="29.500" height="25" rx="6.500" fill="url(#msgB)"/><path d="M41.500,29 L50,20.800 Q52.500,19 52.500,22 V40 Q52.500,43 50,41.200 L41.500,33 Z" fill="url(#msgB)"/></g>
<g transform="translate(719.8,1329)"><rect x="54" y="20" width="10" height="11" rx="2" fill="#6cb0ea"/><rect x="54" y="32" width="10" height="10" rx="2" fill="#f19a38"/><rect x="54" y="43" width="10" height="9" rx="2" fill="#7bc65b"/>
<rect width="60" height="62" rx="13" fill="url(#ct)"/><circle cx="31" cy="31" r="18.500" fill="#bb8c50" stroke="#9c6f35" stroke-width="1.600"/>
<circle cx="31" cy="26" r="6.200" fill="#a2763b"/><path d="M17.500,42.500 Q20,35 31,35 Q42,35 44.500,42.500 Q39,49.200 31,49.200 Q23,49.200 17.500,42.500 Z" fill="#a2763b"/></g>
<g transform="translate(800.1,1329)"><rect width="62" height="62" rx="14.500" fill="url(#rm)"/><circle cx="12.500" cy="15.5" r="5" fill="#fff" stroke="#1c78ee" stroke-width="1.200"/><circle cx="12.500" cy="15.5" r="3" fill="#1c78ee"/><rect x="22" y="14.9" width="32" height="1.200" fill="#c9c9c9"/><circle cx="12.500" cy="30.8" r="5" fill="#fff" stroke="#ee3b30" stroke-width="1.200"/><circle cx="12.500" cy="30.8" r="3" fill="#ee3b30"/><rect x="22" y="30.2" width="32" height="1.200" fill="#c9c9c9"/><circle cx="12.500" cy="46" r="5" fill="#fff" stroke="#f6a01a" stroke-width="1.200"/><circle cx="12.500" cy="46" r="3" fill="#f6a01a"/><rect x="22" y="45.4" width="32" height="1.200" fill="#c9c9c9"/></g>
<g transform="translate(880.4,1329)"><g clip-path="url(#sq)"><rect width="62" height="62" fill="#f7f5f1"/><rect width="62" height="15.500" fill="#fdd02f"/><rect y="13" width="62" height="3" fill="#f0bf1f"/><rect x="2" y="24.5" width="58" height="1" fill="#dedbd4"/><rect x="2" y="33" width="58" height="1" fill="#dedbd4"/><rect x="2" y="41.5" width="58" height="1" fill="#dedbd4"/><rect x="2" y="50" width="58" height="1" fill="#dedbd4"/></g></g>
<g transform="translate(960.7,1329)"><rect width="62" height="62" rx="14.500" fill="url(#tv)"/>
<g transform="translate(8,17.500) scale(0.0245)"><path fill="#fff" d="M788.1 340.9c-5.8 4.5-108.2 62.2-108.2 190.5 0 148.4 130.3 200.9 134.2 202.2-.6 3.2-20.700 73.900-68.700 143.900-42.800 61.600-87.500 123.100-155.500 123.100s-85.500-39.500-164-39.500c-76.500 0-103.700 40.800-165.900 40.800s-105.600-57-155.500-127C46.700 790.700 0 663 0 541.800c0-194.400 126.400-297.500 250.800-297.500 66.100 0 121.200 43.400 162.700 43.400 39.500 0 101.100-46 176.300-46 28.500 0 130.900 2.600 198.300 99.200zm-234-181.500c31.100-36.900 53.100-88.100 53.100-139.300 0-7.100-.6-14.300-1.900-20.100-50.600 1.900-110.800 33.700-147.100 75.800-28.500 32.400-55.100 83.600-55.100 135.500 0 7.800 1.300 15.600 1.900 18.100 3.200.6 8.400 1.300 13.600 1.300 45.400 0 102.500-30.400 135.500-71.300z"/></g>
<text x="29.500" y="41" font-family="Liberation Sans, sans-serif" font-size="27" fill="#fff" letter-spacing=".3">tv</text></g>
<g transform="translate(1041.0,1329)"><rect width="62" height="62" rx="14.500" fill="url(#mu)"/>
<path d="M22.500,15.500 L45.500,9.800 V40.500 A6.200,5.400 0 1 1 41,35.300 V21.400 L27,24.900 V45 A6.200,5.400 0 1 1 22.500,39.800 Z" fill="#fff"/></g>
<g transform="translate(1121.3,1329)"><rect width="62" height="62" rx="14.500" fill="url(#pd)"/>
<path d="M16.500,43 A19.500,19.500 0 1 1 45.500,43" fill="none" stroke="#fff" stroke-width="2.600" stroke-linecap="round"/>
<path d="M21.800,38 A12.300,12.300 0 1 1 40.200,38" fill="none" stroke="#fff" stroke-width="2.600" stroke-linecap="round"/>
<circle cx="31" cy="28" r="4.700" fill="#fff"/><path d="M26.800,38.500 Q26.800,35 31,35 Q35.200,35 35.200,38.500 L33.800,50.500 Q33.500,52.500 31,52.500 Q28.500,52.500 28.200,50.500 Z" fill="#fff"/></g>
<g transform="translate(1201.6,1329)"><rect width="62" height="62" rx="14.500" fill="#fdfdfd"/>
<clipPath id="nw"><rect x="13" y="13" width="36" height="36" rx="3"/></clipPath>
<g clip-path="url(#nw)"><rect x="13" y="13" width="36" height="36" fill="#f2335b"/>
<path d="M27,11 L51,35" stroke="#fff" stroke-width="5" /><path d="M11,27 L35,51" stroke="#fff" stroke-width="5"/></g></g>
<g transform="translate(1281.9,1329)"><rect width="62" height="62" rx="14.500" fill="url(#as)"/>
<g stroke="#fff" stroke-width="4.200" stroke-linecap="round" fill="none"><path d="M34.500,14.500 L18.500,42.500"/><path d="M27.500,14.500 L43.500,42.500 M14,49 L16,45.500"/><path d="M11.500,37 H36 M42,37 H50.500"/></g></g>
<g transform="translate(1362.2,1329)"><rect width="62" height="62" rx="14.500" fill="url(#sp)"/>
<circle cx="31" cy="31" r="22.500" fill="url(#spG)"/><g stroke="#4a4a4a" stroke-width="1.700"><line x1="52.50" y1="31.00" x2="55.80" y2="31.00"/><line x1="52.24" y1="34.36" x2="55.49" y2="34.88"/><line x1="51.45" y1="37.64" x2="54.59" y2="38.66"/><line x1="50.16" y1="40.76" x2="53.10" y2="42.26"/><line x1="48.39" y1="43.64" x2="51.06" y2="45.58"/><line x1="46.20" y1="46.20" x2="48.54" y2="48.54"/><line x1="43.64" y1="48.39" x2="45.58" y2="51.06"/><line x1="40.76" y1="50.16" x2="42.26" y2="53.10"/><line x1="37.64" y1="51.45" x2="38.66" y2="54.59"/><line x1="34.36" y1="52.24" x2="34.88" y2="55.49"/><line x1="31.00" y1="52.50" x2="31.00" y2="55.80"/><line x1="27.64" y1="52.24" x2="27.12" y2="55.49"/><line x1="24.36" y1="51.45" x2="23.34" y2="54.59"/><line x1="21.24" y1="50.16" x2="19.74" y2="53.10"/><line x1="18.36" y1="48.39" x2="16.42" y2="51.06"/><line x1="15.80" y1="46.20" x2="13.46" y2="48.54"/><line x1="13.61" y1="43.64" x2="10.94" y2="45.58"/><line x1="11.84" y1="40.76" x2="8.90" y2="42.26"/><line x1="10.55" y1="37.64" x2="7.41" y2="38.66"/><line x1="9.76" y1="34.36" x2="6.51" y2="34.88"/><line x1="9.50" y1="31.00" x2="6.20" y2="31.00"/><line x1="9.76" y1="27.64" x2="6.51" y2="27.12"/><line x1="10.55" y1="24.36" x2="7.41" y2="23.34"/><line x1="11.84" y1="21.24" x2="8.90" y2="19.74"/><line x1="13.61" y1="18.36" x2="10.94" y2="16.42"/><line x1="15.80" y1="15.80" x2="13.46" y2="13.46"/><line x1="18.36" y1="13.61" x2="16.42" y2="10.94"/><line x1="21.24" y1="11.84" x2="19.74" y2="8.90"/><line x1="24.36" y1="10.55" x2="23.34" y2="7.41"/><line x1="27.64" y1="9.76" x2="27.12" y2="6.51"/><line x1="31.00" y1="9.50" x2="31.00" y2="6.20"/><line x1="34.36" y1="9.76" x2="34.88" y2="6.51"/><line x1="37.64" y1="10.55" x2="38.66" y2="7.41"/><line x1="40.76" y1="11.84" x2="42.26" y2="8.90"/><line x1="43.64" y1="13.61" x2="45.58" y2="10.94"/><line x1="46.20" y1="15.80" x2="48.54" y2="13.46"/><line x1="48.39" y1="18.36" x2="51.06" y2="16.42"/><line x1="50.16" y1="21.24" x2="53.10" y2="19.74"/><line x1="51.45" y1="24.36" x2="54.59" y2="23.34"/><line x1="52.24" y1="27.64" x2="55.49" y2="27.12"/></g>
<circle cx="31" cy="31" r="17" fill="#8d8d8d" stroke="#c9c9c9" stroke-width="1.500"/><circle cx="31" cy="31" r="13.500" fill="#5d5d5d"/>
<g stroke="#b5b5b5" stroke-width="3.200" stroke-linecap="round"><path d="M31,31 L22.500,18 M31,31 L47,31 M31,31 L22.500,44"/></g><circle cx="31" cy="31" r="3" fill="#bdbdbd"/></g>
<g transform="translate(1474,1359.200)"><circle r="35" fill="#fafcff"/><circle r="32" fill="#3e9fe9"/>
<clipPath id="mtc"><circle r="32"/></clipPath><rect x="-33" y="10" width="66" height="24" fill="#3a8ddb" clip-path="url(#mtc)"/>
<path d="M-33,9.500 H33" stroke="#fff" stroke-width="3"/><path d="M-26,9.500 L-14.400,-13.500 L-7.400,-0.500 L6.600,-24.500 L23.700,9.500" fill="none" stroke="#fff" stroke-width="3.200" stroke-linejoin="miter"/></g>
<rect x="1532.200" y="1328" width="1.600" height="70" fill="#9c9c9c"/><rect x="1810" y="1328" width="1.600" height="70" fill="#9c9c9c"/>
<g transform="translate(1560,1329.300)"><clipPath id="te"><rect width="60.500" height="62" rx="14"/></clipPath>
<g clip-path="url(#te)"><rect width="60.500" height="62" fill="#fdfdfd"/><rect x="0" y="15" width="60" height="1.100" fill="#c7c5c9"/><rect x="0" y="21.5" width="60" height="1.100" fill="#c7c5c9"/><rect x="0" y="28" width="60" height="1.100" fill="#c7c5c9"/><rect x="0" y="34.5" width="60" height="1.100" fill="#c7c5c9"/><rect x="0" y="41" width="60" height="1.100" fill="#c7c5c9"/><rect x="0" y="47.5" width="60" height="1.100" fill="#c7c5c9"/><rect x="0" y="54" width="60" height="1.100" fill="#c7c5c9"/><rect x="10" y="0" width="1" height="62" fill="#f0c9c5"/></g>
<path d="M53,-6 L58,-3.500 L27,58 L22.500,64.500 L23,56 Z" fill="url(#pen)" stroke="#73879c" stroke-width=".8"/><path d="M54.500,-3 L36,33" stroke="#2b4a6b" stroke-width="1.200"/></g>
<g transform="translate(1640.300,1329.800)"><rect width="60" height="61" rx="13" fill="#fbfbfd"/>
<clipPath id="pv"><rect x="4.500" y="4.500" width="51" height="52" rx="8"/></clipPath>
<g clip-path="url(#pv)"><rect x="4" y="4" width="52" height="30" fill="url(#pvS)"/><rect x="4" y="31.500" width="52" height="8" fill="#1e2d72"/><rect x="4" y="38.500" width="52" height="20" fill="#d9dee6"/><path d="M4,44 L20,41 L32,46 L30,52 L4,56 Z" fill="#8a8f99"/></g>
<path d="M30,40 Q29,36 34,36 L51,36 Q56,36 55,40 L61,58 Q62,62.500 57,62.500 L28,62.500 Q23,62.500 24,58 Z" fill="#e8ecf0" stroke="#6d747c" stroke-width="1"/>
<ellipse cx="42.500" cy="52" rx="11" ry="7" fill="#fafbfc" stroke="#9aa2aa" stroke-width=".8"/><path d="M36,52 l4,-3 l3,2 l4,-4 l3,6 Z" fill="#4a4f58"/>
<rect x="29.500" y="29.500" width="26" height="10.500" rx="3" fill="#17181a"/><ellipse cx="42.500" cy="30" rx="13" ry="2.600" fill="#3a3c40"/></g>
<g transform="translate(1720.500,1329.800)"><rect width="59" height="61.500" rx="14.500" fill="#e9e9eb"/><rect x="1.500" y="1.500" width="56" height="58.500" rx="13" fill="#0b0b0c"/>
<rect x="5.500" y="5.500" width="48" height="50" rx="8" fill="#0f2a26"/><g stroke="#2d5a50" stroke-width=".7" opacity=".8"><path d="M12.5,6 V55" /><path d="M19.5,6 V55" /><path d="M26.5,6 V55" /><path d="M33.5,6 V55" /><path d="M40.5,6 V55" /><path d="M47.5,6 V55" /><path d="M6,12.5 H53" /><path d="M6,19.5 H53" /><path d="M6,26.5 H53" /><path d="M6,33.5 H53" /><path d="M6,40.5 H53" /><path d="M6,47.5 H53" /></g>
<path d="M7,32.500 L13,34 L14.500,36.500 L16.500,9 L19,42.500 L21,34 L26,32 C29,24 31,24 33.500,31 C35.500,36 37.500,36 39.500,31 C41,28 43,29 45,32.500 L48,33.500" fill="none" stroke="#7fe3c1" stroke-width="1.400" stroke-linejoin="round"/></g>
<g transform="translate(1832,1330.400)"><path d="M0,8 Q0,0 7,0 H22 Q25,0 27.500,2.600 L30,5.400 Q31.500,7 34.500,7 H64 Q72,7 72,14 V20 H0 Z" fill="#3d9ee4"/>
<rect x="0" y="10.500" width="72" height="49.500" rx="5" fill="url(#fd)"/><rect x="0" y="56.500" width="72" height="3.500" rx="2" fill="#58aee9"/>
<circle cx="36" cy="32.300" r="13" fill="#46a3e6"/><path d="M36,24.500 V39 M30,33.500 L36,39.500 L42,33.500" fill="none" stroke="#8ed2fb" stroke-width="2.400" stroke-linecap="round" stroke-linejoin="round"/></g>
<g transform="translate(1921.300,1324)"><path d="M1,13 Q27,20 53,13 L46.500,64 Q45.500,69.500 27,69.500 Q8.500,69.500 7.500,64 Z" fill="url(#tr)" stroke="#bdbdc0" stroke-width=".8" opacity=".8"/>
<ellipse cx="27" cy="12" rx="26.500" ry="7.500" fill="#eeeeef" stroke="#c9c9cc" stroke-width="1"/>
<path d="M5,12 L9,2 L15,6 L19,-3 L27,4 L33,-3 L38,5 L46,0 L49,12 Q27,19 5,12 Z" fill="#fafafa" stroke="#a9a9ad" stroke-width=".7"/>
<path d="M10,11 L13,4 L19,10 Z M22,8 L27,2 L31,9 Z M34,9 L38,3 L42,10 Z M43,10 L46,4 L47,11 Z" fill="#4d4039"/><path d="M18,4 L21,-1 L24,5 Z" fill="#3f9a6b"/><path d="M29,6 L33,0 L35,7 Z" fill="#9b3b33"/></g>
<circle cx="107.900" cy="1404" r="3.900" fill="#464646"/><circle cx="1750" cy="1404" r="3.900" fill="#464646"/>
</svg><!--/DOCKSVG-->
</body>
</html>
